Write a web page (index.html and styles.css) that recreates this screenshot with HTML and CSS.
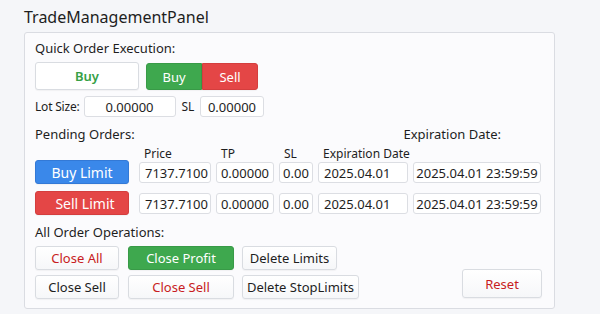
FILE: index.html
```html
<!DOCTYPE html>
<html lang="en">
<head>
    <meta charset="UTF-8">
    <title>TradeManagementPanel</title>
    <link rel="stylesheet" href="styles.css">
</head>
<body>
    <h1 class="title">TradeManagementPanel</h1>
    <div class="panel">
        <div class="section-label">Quick Order Execution:</div>
        <div class="quick-row">
            <button class="btn btn-buy-plain">Buy</button>
            <div class="btn-group">
                <button class="btn btn-green">Buy</button>
                <button class="btn btn-red">Sell</button>
            </div>
        </div>
        <div class="lot-row">
            <span class="small-label">Lot Size:</span>
            <div class="field lot-field">0.00000</div>
            <span class="small-label">SL</span>
            <div class="field sl-field">0.00000</div>
        </div>

        <div class="pending-head">
            <span class="section-label">Pending Orders:</span>
            <span class="section-label exp-label">Expiration Date:</span>
        </div>
        <div class="pending-grid">
            <span></span>
            <span class="col-head">Price</span>
            <span class="col-head">TP</span>
            <span class="col-head">SL</span>
            <span class="col-head">Expiration Date</span>
            <span></span>

            <button class="btn btn-blue">Buy Limit</button>
            <div class="field">7137.7100</div>
            <div class="field center">0.00000</div>
            <div class="field center">0.00</div>
            <div class="field date">2025.04.01</div>
            <div class="field center">2025.04.01 23:59:59</div>

            <button class="btn btn-red limit">Sell Limit</button>
            <div class="field">7137.7100</div>
            <div class="field center">0.00000</div>
            <div class="field center">0.00</div>
            <div class="field date">2025.04.01</div>
            <div class="field center">2025.04.01 23:59:59</div>
        </div>

        <div class="section-label ops-label">All Order Operations:</div>
        <div class="ops">
            <div class="ops-rows">
                <div class="ops-row">
                    <button class="btn btn-light text-red w-84">Close All</button>
                    <button class="btn btn-green w-106">Close Profit</button>
                    <button class="btn btn-light w-95">Delete Limits</button>
                </div>
                <div class="ops-row">
                    <button class="btn btn-light w-84">Close Sell</button>
                    <button class="btn btn-light text-red w-106">Close Sell</button>
                    <button class="btn btn-light w-117">Delete StopLimits</button>
                </div>
            </div>
            <button class="btn btn-light text-red reset">Reset</button>
        </div>
    </div>
</body>
</html>
```

FILE: styles.css
```css
body {
    font-family: "Noto Sans", "Open Sans", sans-serif;
    background-color: #f5f6f9;
    margin: 0;
    padding: 6px 0 0 24px;
    color: #1e1e1e;
}
.title {
    font-size: 16px;
    font-weight: 400;
    margin: 0 0 4px 0;
    line-height: 22px;
}
.panel {
    width: 507px;
    background: #fbfbfd;
    border: 1px solid #dadce2;
    border-radius: 3px;
    padding: 6px 12px 9px 10px;
}
.section-label {
    font-size: 13px;
    line-height: 18px;
}
.btn {
    font-family: inherit;
    font-size: 13px;
    border: 1px solid #d9dce1;
    border-radius: 3px;
    background: #fff;
    color: #1e1e1e;
    padding: 0;
    height: 24px;
    cursor: pointer;
    box-shadow: 0 1px 1px rgba(0,0,0,0.04);
}
.btn-light {
    background: linear-gradient(#ffffff, #f6f7f9);
}
.btn-buy-plain {
    width: 104px;
    height: 28px;
    color: #36a046;
    font-weight: 600;
}
.quick-row {
    display: flex;
    gap: 7px;
    margin-top: 5px;
}
.btn-group {
    display: flex;
    margin-top: 1px;
}
.btn-group .btn {
    width: 56px;
    height: 27px;
}
.btn-group .btn-green {
    border-radius: 3px 0 0 3px;
}
.btn-group .btn-red {
    border-radius: 0 3px 3px 0;
}
.btn-green {
    background: #3ea84e;
    border-color: #389a47;
    color: #fff;
}
.btn-red {
    background: #e44646;
    border-color: #d43e3e;
    color: #fff;
}
.btn-blue {
    background: #3a88ea;
    border-color: #3379d6;
    color: #fff;
}
.text-red {
    color: #c81c22;
}
.lot-row {
    display: flex;
    align-items: center;
    gap: 6px;
    margin-top: 6px;
}
.small-label {
    font-size: 12px;
    letter-spacing: -0.2px;
}
.lot-row .small-label:first-child {
    margin-right: -2px;
}
.field {
    font-size: 13px;
    height: 21px;
    line-height: 21px;
    background: #fff;
    border: 1px solid #dcdee3;
    border-radius: 3px;
    padding: 0 5px;
    box-sizing: border-box;
    white-space: nowrap;
    overflow: hidden;
}
.center {
    text-align: center;
    padding: 0;
}
.lot-field {
    width: 92px;
    text-align: center;
}
.sl-field {
    width: 64px;
    text-align: center;
}
.pending-head {
    display: flex;
    justify-content: space-between;
    margin-top: 8px;
    padding-right: 41px;
}
.pending-grid {
    display: grid;
    grid-template-columns: 99px 72px 58px 34px 90px 128px;
    column-gap: 5px;
    row-gap: 7px;
    align-items: center;
    margin-top: 3px;
}
.pending-grid .btn {
    width: 94px;
    font-size: 14px;
}
.pending-grid .limit {
    padding-left: 6px;
}
.col-head {
    font-size: 12px;
    line-height: 16px;
    padding-left: 5px;
    margin-bottom: -9px;
    white-space: nowrap;
}
.pending-grid .date {
    padding-left: 5px;
}
.ops-label {
    margin-top: 8px;
}
.ops {
    display: flex;
    margin-top: 5px;
}
.ops-rows {
    display: flex;
    flex-direction: column;
    gap: 5px;
}
.ops-row {
    display: flex;
    gap: 8px;
}
.ops-row .btn:first-child {
    margin-right: 1px;
}
.w-84 { width: 84px; }
.w-106 { width: 106px; }
.w-95 { width: 95px; }
.w-117 { width: 117px; }
.reset {
    margin-left: auto;
    align-self: flex-end;
    width: 80px;
    height: 29px;
    margin-bottom: 1px;
}
```
